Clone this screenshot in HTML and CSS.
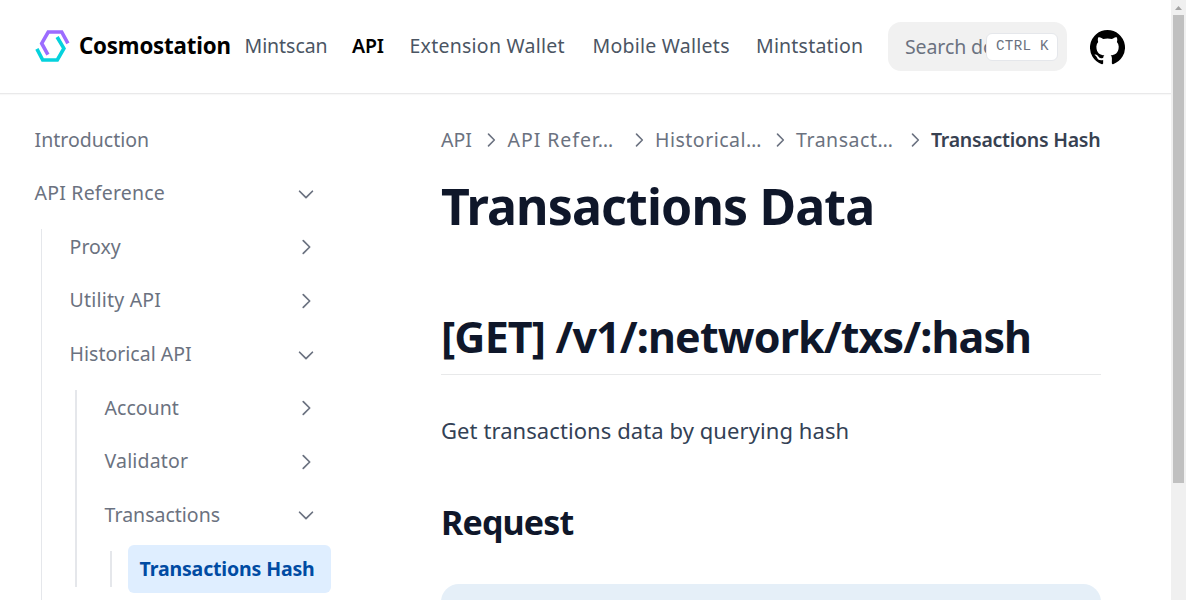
FILE: index.html
```html
<!DOCTYPE html>
<html lang="en">
<head>
<meta charset="utf-8">
<title>Transactions Data – Cosmostation</title>
<link rel="stylesheet" href="styles.css">
</head>
<body>
<svg class="defs" width="0" height="0"><symbol id="chev" viewBox="0 0 24 24"><path d="M9 5l7 7-7 7" fill="none" stroke="currentColor" stroke-width="1.9" stroke-linecap="round" stroke-linejoin="round"/></symbol></svg>
<div class="window">
  <div class="page">
    <header class="navbar">
      <a class="brand">
        <svg class="logo" viewBox="0 0 35 34" fill="none" stroke-width="3.6"><path d="M32.9 14.3L26.7 3H13.2L6.7 14.4L12.9 25.6" stroke="#9c6cff"/><path d="M1.9 19.8L7.7 31H22.3L28.9 19.4L22.1 8" stroke="#05d2dd"/></svg>
        <span class="brand-name">Cosmostation</span>
      </a>
      <nav class="links">
        <a class="l1">Mintscan</a><a class="l2">API</a><a class="l3">Extension Wallet</a><a class="l4">Mobile Wallets</a><a class="l5">Mintstation</a>
      </nav>
      <div class="search"><span class="hint">Search do</span><kbd>CTRL K</kbd></div>
      <svg class="github" viewBox="2 2.4 20 19.6"><path fill="#000" d="M12 2.247a10 10 0 0 0-3.162 19.487c.5.088.687-.212.687-.475 0-.237-.012-1.025-.012-1.862-2.513.462-3.163-.613-3.363-1.175a3.636 3.636 0 0 0-1.025-1.413c-.35-.187-.85-.65-.013-.662a2.001 2.001 0 0 1 1.538 1.025 2.137 2.137 0 0 0 2.912.825 2.104 2.104 0 0 1 .638-1.338c-2.225-.25-4.55-1.112-4.55-4.937a3.892 3.892 0 0 1 1.025-2.688 3.594 3.594 0 0 1 .1-2.65s.837-.262 2.75 1.025a9.427 9.427 0 0 1 5 0c1.912-1.3 2.75-1.025 2.75-1.025a3.593 3.593 0 0 1 .1 2.65 3.869 3.869 0 0 1 1.025 2.688c0 3.837-2.338 4.687-4.563 4.937a2.368 2.368 0 0 1 .675 1.85c0 1.338-.012 2.413-.012 2.75 0 .263.187.575.687.475A10.005 10.005 0 0 0 12 2.247z"/></svg>
    </header>
    <div class="body">
      <aside class="sidebar">
        <ul class="menu">
          <li><a class="item"><span class="t-intro">Introduction</span></a></li>
          <li><a class="item"><span class="t-ref">API Reference</span><svg class="arrow open"><use href="#chev"/></svg></a>
            <ul class="menu sub">
              <li><a class="item"><span class="t-proxy">Proxy</span><svg class="arrow"><use href="#chev"/></svg></a></li>
              <li><a class="item"><span class="t-util">Utility API</span><svg class="arrow"><use href="#chev"/></svg></a></li>
              <li><a class="item"><span class="t-hist">Historical API</span><svg class="arrow open"><use href="#chev"/></svg></a>
                <ul class="menu sub inner">
                  <li><a class="item"><span class="t-acc">Account</span><svg class="arrow"><use href="#chev"/></svg></a></li>
                  <li><a class="item"><span class="t-val">Validator</span><svg class="arrow"><use href="#chev"/></svg></a></li>
                  <li><a class="item"><span class="t-tx">Transactions</span><svg class="arrow open"><use href="#chev"/></svg></a>
                    <ul class="menu sub leaf"><li><a class="item active"><span>Transactions Hash</span></a></li></ul>
                  </li>
                </ul>
              </li>
            </ul>
          </li>
        </ul>
      </aside>
      <main class="content">
        <div class="crumbs">
          <span class="c1">API</span><svg class="sep"><use href="#chev"/></svg>
          <span class="c2">API Refer…</span><svg class="sep"><use href="#chev"/></svg>
          <span class="c3">Historical…</span><svg class="sep"><use href="#chev"/></svg>
          <span class="c4">Transact…</span><svg class="sep"><use href="#chev"/></svg>
          <span class="c5">Transactions Hash</span>
        </div>
        <h1>Transactions Data</h1>
        <h2>[GET] /v1/:network/txs/:hash</h2>
        <p>Get transactions data by querying hash</p>
        <h3>Request</h3>
        <div class="code"></div>
      </main>
    </div>
  </div>
  <div class="scrollbar"><svg class="up" viewBox="0 0 15 15"><path d="M4 10h7L7.5 6z" fill="#a3a3a3"/></svg><div class="thumb"></div></div>
</div>
</body>
</html>
```
FILE: styles.css
```css
* { box-sizing: border-box; }
body { margin: 0; background: #fff; font-family: "Noto Sans", sans-serif; font-size: 19.5px; color: #6b7280; overflow: hidden; }
.defs { display: block; height: 0; }
.window { display: flex; width: 1186px; height: 600px; overflow: hidden; }
.page { width: 1171px; height: 600px; overflow: hidden; }
.navbar { display: flex; align-items: center; height: 93px; padding-left: 35px; box-shadow: 0 1px 0 #e9e9ea, 0 2px 1px #f8f8f8; white-space: nowrap; }
.brand { display: flex; align-items: center; width: 209.5px; color: #000; }
.logo { width: 35px; height: 34px; flex: none; margin-right: 9px; margin-top: -1px; }
.brand-name { font-weight: 700; font-size: 22.3px; letter-spacing: -0.2px; padding-bottom: 3px; }
.links { display: flex; color: #4b5563; width: 643.5px; line-height: 28px; padding-bottom: 2px; }
.l1 { width: 107.5px; letter-spacing: -0.05px; }
.l2 { width: 57.5px; color: #000; font-weight: 600; letter-spacing: -0.2px; }
.l3 { width: 183px; letter-spacing: 0.25px; }
.l4 { width: 163.5px; letter-spacing: 0.25px; }
.l5 { letter-spacing: 0.2px; }
.search { display: flex; align-items: center; width: 179px; height: 49px; border-radius: 13px; background: #f1f1f1; padding: 0 9px 0 17px; }
.hint { width: 81px; overflow: hidden; letter-spacing: -0.1px; line-height: 30px; }
kbd { width: 72px; height: 28px; border: 1px solid #e5e7eb; border-radius: 6px; background: #fff; font: 14.2px/25px "Liberation Mono", monospace; padding-left: 9px; flex: none; letter-spacing: 0.3px; }
.github { width: 35px; height: 35px; margin-left: 23px; margin-top: 1px; }
.body { display: flex; }
.sidebar { width: 441px; padding: 23px 0 0 23px; }
.menu { list-style: none; margin: 0; padding: 0; display: flex; flex-direction: column; gap: 5.63px; width: 308px; }
.item { display: flex; align-items: center; justify-content: space-between; height: 48px; padding: 0 14px 0 12px; }
.item span { padding-bottom: 2px; margin-left: -0.4px; }
.t-ref { letter-spacing: 0.2px; }
.t-util { letter-spacing: 0.2px; }
.t-val { letter-spacing: 0.15px; }
.sub { position: relative; width: auto; margin-top: 5.63px; padding-left: 35px; }
.sub::before { content: ""; position: absolute; left: 18px; top: 6px; bottom: 6px; width: 1px; background: #e5e7eb; }
.menu > li > .sub:not(.inner):not(.leaf)::before { bottom: -30px; }
.inner::before, .leaf::before { width: 2px; left: 17px; }
.active { background: #dfeeff; color: #004ba3; font-weight: 700; border-radius: 6px; letter-spacing: -0.15px; white-space: nowrap; }
.arrow { width: 22px; height: 22px; }
.open { transform: rotate(90deg); }
.content { width: 660px; }
.crumbs { display: flex; align-items: center; height: 28px; margin-top: 33px; white-space: nowrap; }
.crumbs span { padding-bottom: 2px; }
.sep { width: 20px; height: 20px; flex: none; }
.c1 { width: 40px; } .c2 { width: 121.5px; margin-left: 6.5px; letter-spacing: 0.95px; } .c3 { width: 115px; margin-left: 6px; letter-spacing: 0.5px; } .c4 { width: 108.5px; margin-left: 6px; letter-spacing: 0.55px; }
.c5 { margin-left: 6.5px; color: #374151; font-weight: 600; letter-spacing: -0.25px; }
h1, h2, h3 { margin: 0; color: #0f172a; white-space: nowrap; font-weight: 700; }
h1 { font-size: 50px; line-height: 56px; margin-top: 24px; letter-spacing: -0.85px; }
h2 { font-size: 43px; line-height: 53px; height: 65px; margin-top: 76px; border-bottom: 1px solid #e8e9ea; letter-spacing: -0.87px; }
p { margin: 36px 0 0; font-size: 22px; line-height: 39px; color: #334155; white-space: nowrap; letter-spacing: 0.08px; }
h3 { font-size: 34px; line-height: 44px; margin-top: 50px; letter-spacing: -0.85px; }
.code { height: 80px; margin-top: 40px; border-radius: 18px; background: #e5eff8; }
.scrollbar { width: 15px; height: 600px; background: #f0f0f0; }
.up { display: block; width: 15px; height: 15px; }
.thumb { width: 11px; height: 468px; margin-left: 2px; background: #c0c0c0; }
```
